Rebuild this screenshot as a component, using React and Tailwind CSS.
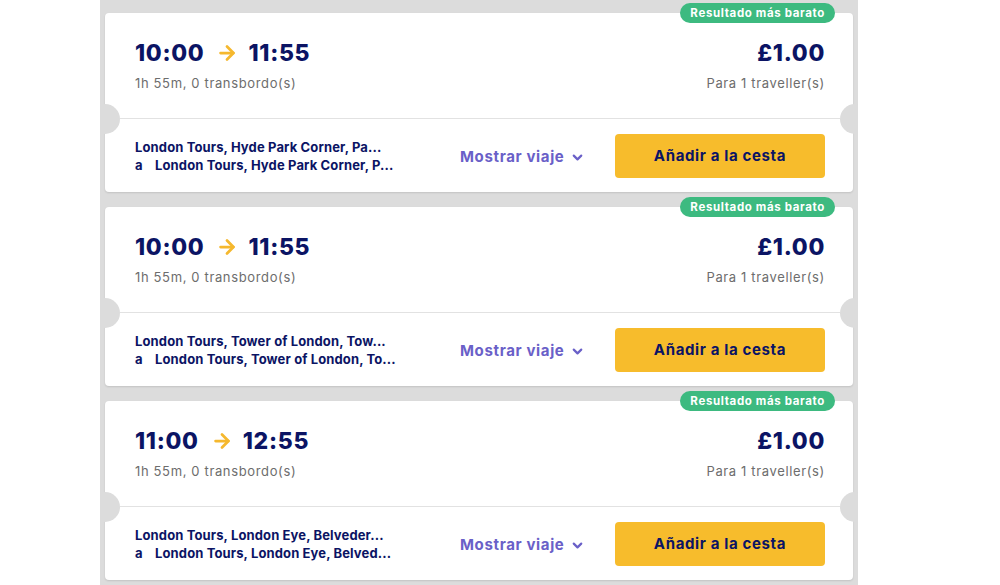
import React from 'react'
import { ArrowRight, ChevronDown } from 'lucide-react'

const journeys = [
  { dep: '10:00', arr: '11:55', from: 'London Tours, Hyde Park Corner, Pa...', to: 'London Tours, Hyde Park Corner, P...' },
  { dep: '10:00', arr: '11:55', from: 'London Tours, Tower of London, Tow...', to: 'London Tours, Tower of London, To...' },
  { dep: '11:00', arr: '12:55', from: 'London Tours, London Eye, Belveder...', to: 'London Tours, London Eye, Belved...' },
]

const JourneyCard = ({ j }) => {
  return (
    <div className="relative bg-white rounded-[4px] shadow-[0_1px_2px_rgba(0,0,0,0.12)] h-[179px]">
      {/* badge */}
      <div className="absolute right-[18px] -top-[10px] h-[20px] px-[10px] rounded-full bg-[#3dba80] text-white text-[11.5px] font-bold leading-[20px]">
        Resultado más barato
      </div>

      {/* top part */}
      <div className="h-[106px] pl-[30px] pr-[28px] pt-[25px] flex justify-between border-b border-[#e2e2e2]">
        <div>
          <div className="flex items-center text-[23px] font-extrabold text-[#0b1464] leading-[30px] tracking-[0.03em]">
            <span>{j.dep}</span>
            <ArrowRight className="ml-[12px] mr-[10px] text-[#f5b82e]" size={22} strokeWidth={3} />
            <span>{j.arr}</span>
          </div>
          <p className="mt-[6px] text-[13px] text-[#6d6d6d]">1h 55m, 0 transbordo(s)</p>
        </div>
        <div className="text-right">
          <div className="text-[23px] font-extrabold text-[#0b1464] leading-[30px] tracking-[0.03em]">£1.00</div>
          <p className="mt-[6px] text-[13px] text-[#6d6d6d]">Para 1 traveller(s)</p>
        </div>
      </div>

      {/* bottom part */}
      <div className="h-[73px] pl-[30px] pr-[28px] pt-[1px] flex items-center">
        <div className="w-[290px] text-[13px] font-bold text-[#0b1464] leading-[18px] tracking-[0.01em] whitespace-nowrap">
          <p>{j.from}</p>
          <p className="flex">
            <span className="w-[20px] shrink-0">a</span>
            <span>{j.to}</span>
          </p>
        </div>
        <button className="ml-[35px] mt-[2px] flex items-center gap-[6px] text-[15px] font-bold text-[#6a60c8]">
          Mostrar viaje
          <ChevronDown size={15} strokeWidth={3.5} />
        </button>
        <button className="ml-auto w-[210px] h-[44px] rounded-[4px] bg-[#f7bc2c] text-[15px] font-bold text-[#0b1464] pt-[1px]">
          Añadir a la cesta
        </button>
      </div>

      {/* ticket notches */}
      <div className="absolute left-[-15px] top-[91px] w-[30px] h-[30px] rounded-full bg-[#dcdcdc]"></div>
      <div className="absolute right-[-17px] top-[91px] w-[30px] h-[30px] rounded-full bg-[#dcdcdc]"></div>
    </div>
  )
}

export default function App() {
  return (
    <div className="min-h-screen bg-white font-['Inter',sans-serif] tracking-[0.04em]">
      <div className="ml-[100px] w-[758px] min-h-screen overflow-hidden bg-[#dcdcdc] px-[5px] pt-[13px] pb-[10px] flex flex-col gap-[15px]">
        {journeys.map((j, i) => (
          <JourneyCard key={i} j={j} />
        ))}
      </div>
    </div>
  )
}
